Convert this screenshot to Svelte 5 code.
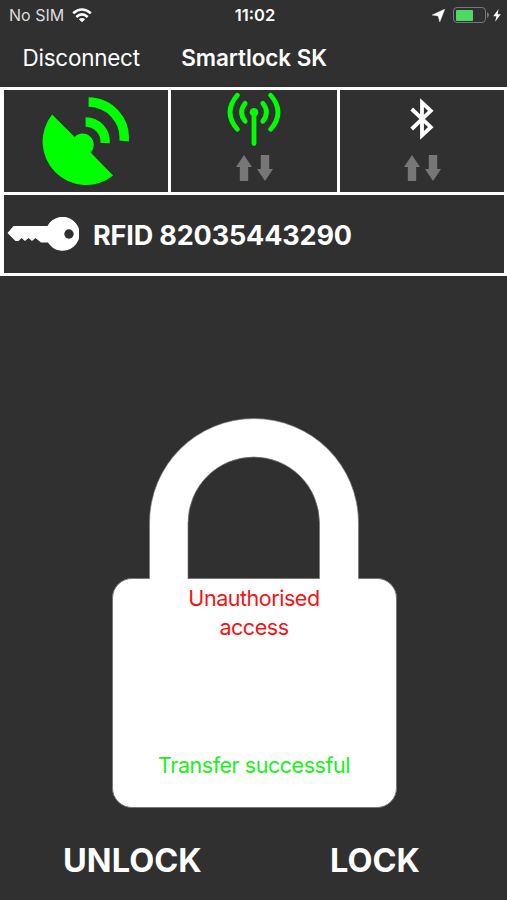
<script lang="ts">
  const carrier = "No SIM";
  const time = "11:02";
  const deviceName = "Smartlock SK";
  const tagId = "82035443290";
  const battery = 0.62;

  const ARROW_UP = "M8 0 L16 12 H12.2 V26 H3.8 V12 H0 Z";
  const ARROW_DOWN = "M3.8 0 H12.2 V14 H16 L8 26 L0 14 H3.8 Z";
</script>

{#snippet traffic()}
  <div class="traffic">
    <svg width="16" height="26" viewBox="0 0 16 26"><path d={ARROW_UP} /></svg>
    <svg width="16" height="26" viewBox="0 0 16 26"><path d={ARROW_DOWN} /></svg>
  </div>
{/snippet}

<div class="screen">
  <div class="status-bar">
    <div class="carrier">
      <span>{carrier}</span>
      <svg width="20" height="15" viewBox="0 0 20 15" fill="none" stroke="#fff" stroke-width="2.6">
        <path d="M1.2 5.3 Q10 -2.3 18.8 5.3" />
        <path d="M4.3 8.9 Q10 4 15.7 8.9" />
        <path d="M10 14.2 L6.9 11.2 Q10 8.8 13.1 11.2 Z" fill="#fff" stroke="none" />
      </svg>
    </div>
    <span class="time">{time}</span>
    <div class="power">
      <svg class="location" width="13" height="13" viewBox="0 0 13 13">
        <path d="M12.7 0.2 L7.8 12.8 L6.2 6.9 L0.2 6 Z" fill="#fff" stroke="#fff" stroke-width="0.5" />
      </svg>
      <div class="battery">
        <div class="level" style="width: {battery * 100}%"></div>
      </div>
      <svg class="nub" width="2" height="6" viewBox="0 0 2 6">
        <path d="M0 0 Q2 1 2 3 Q2 5 0 6 Z" fill="#777" />
      </svg>
      <svg width="8" height="13" viewBox="0 0 8 13">
        <path d="M5.6 0 L0.2 7.2 H3.4 L2.1 12.8 L7.8 5.2 H4.6 Z" fill="#fff" />
      </svg>
    </div>
  </div>

  <header>
    <button class="back">Disconnect</button>
    <h1>{deviceName}</h1>
  </header>

  <section class="panel">
    <div class="cell">
      <svg class="dish" width="88" height="88" viewBox="-1.6 0.5 88 88">
        <path
          d="M8.5 18 L31 40.5 A11 11 0 0 1 47 56 L69.5 79 A43.4 43.4 0 0 1 8.5 18 Z"
          fill="#0f0"
        />
        <g fill="none" stroke="#0f0" stroke-width="9.5">
          <path d="M42 25.5 A19.5 19.5 0 0 1 61.5 46.5" />
          <path d="M45 5.5 A36 36 0 0 1 80.5 44.5" />
        </g>
      </svg>
    </div>
    <div class="cell">
      <svg class="antenna" width="54" height="54" viewBox="0 0 54 54">
        <circle cx="27" cy="20.3" r="4.3" fill="#0f0" />
        <g fill="none" stroke="#0f0" stroke-width="4.8" stroke-linecap="round">
          <path d="M27 20 V51.5" />
          <path d="M18.2 11.3 Q11 20.3 18.2 29.3" />
          <path d="M35.8 11.3 Q43 20.3 35.8 29.3" />
          <path d="M10.3 3.3 Q-4.3 20.3 10.3 37.3" />
          <path d="M43.7 3.3 Q58.3 20.3 43.7 37.3" />
        </g>
      </svg>
      {@render traffic()}
    </div>
    <div class="cell">
      <svg class="bluetooth" width="24" height="42" viewBox="0 0 24 42">
        <path
          d="M1.7 11 L20.8 29.2 L12 37.4 V4.6 L20.8 12.8 L1.7 31"
          fill="none"
          stroke="#fff"
          stroke-width="3.8"
        />
      </svg>
      {@render traffic()}
    </div>
    <div class="cell tag">
      <svg width="72" height="35" viewBox="0 0 72 35">
        <path
          d="M0.5 16 L6.5 9 H40.5 A17 17 0 1 1 41 25.5 H34 L31.5 23.5 L28.5 21 L25 24 L21.5 21 L18 24 L14.5 21 L11.5 24 H8.5 Z"
          fill="#fff"
        />
        <circle cx="62" cy="17" r="4.7" fill="#303030" />
      </svg>
      <span>RFID {tagId}</span>
    </div>
  </section>

  <main>
    <div class="padlock">
      <svg class="shackle" width="210" height="161" viewBox="0 0 210 161">
        <path
          d="M0.5 162 V104.5 A104.5 104 0 0 1 209.5 104.5 V162 H170.5 V105 A65.75 66 0 0 0 39 105 V162 Z"
          fill="#fff"
          stroke="#777"
          stroke-width="0.7"
        />
      </svg>
      <div class="body">
        <p class="alert">Unauthorised access</p>
        <p class="transfer">Transfer successful</p>
      </div>
    </div>
  </main>

  <footer>
    <button>UNLOCK</button>
    <button>LOCK</button>
  </footer>
</div>

<style>
  :global(body) {
    margin: 0;
    background: #303030;
  }

  .screen {
    display: flex;
    flex-direction: column;
    box-sizing: border-box;
    width: 507px;
    height: 900px;
    overflow: hidden;
    background: #303030;
    color: #fff;
    font-family: Inter, "Liberation Sans", sans-serif;
  }

  svg {
    display: block;
    flex: none;
  }

  button {
    padding: 0;
    border: 0;
    background: none;
    color: inherit;
    font: inherit;
    letter-spacing: inherit;
    white-space: nowrap;
  }

  .status-bar {
    display: grid;
    grid-template-columns: 1fr auto 1fr;
    align-items: center;
    height: 30px;
    padding: 0 6px 0 9px;
    font-size: 16px;
  }

  .carrier {
    display: flex;
    align-items: center;
    gap: 8px;
    color: #ddd;
  }

  .time {
    font-size: 16.5px;
    font-weight: 600;
  }

  .power {
    display: flex;
    align-items: center;
    justify-content: flex-end;
  }

  .location {
    margin-right: 8px;
  }

  .battery {
    box-sizing: border-box;
    width: 33px;
    height: 16px;
    padding: 1.5px;
    border: 1.5px solid #777;
    border-radius: 4px;
  }

  .level {
    height: 100%;
    border-radius: 1px;
    background: #4cd964;
  }

  .nub {
    margin: 0 4px 0 1px;
  }

  header {
    display: flex;
    align-items: center;
    height: 55px;
    padding: 0 0 2px 22.5px;
    gap: 41.5px;
    font-size: 22.5px;
    letter-spacing: -0.25px;
  }

  h1 {
    margin: 0;
    font-size: 22.5px;
    font-weight: 600;
    letter-spacing: -0.1px;
  }

  .panel {
    display: grid;
    grid-template-columns: 164px 166px 164px;
    grid-template-rows: 102px 78px;
    gap: 3px;
    padding: 3px 3px 3px 4px;
    background: #fff;
  }

  .cell {
    display: flex;
    flex-direction: column;
    align-items: center;
    background: #303030;
  }

  .dish {
    margin-top: 7px;
  }

  .antenna {
    margin-top: 2px;
  }

  .bluetooth {
    margin-top: 8px;
  }

  .traffic {
    display: flex;
    gap: 5px;
    margin-top: auto;
    margin-bottom: 11px;
    fill: #777;
  }

  .tag {
    grid-column: 1 / -1;
    flex-direction: row;
    gap: 14px;
    padding-left: 3px;
    font-size: 27px;
    font-weight: 700;
    letter-spacing: -0.15px;
  }

  .tag span {
    padding-top: 2px;
  }

  main {
    display: flex;
    flex: 1;
    align-items: flex-end;
    justify-content: center;
    padding-left: 1px;
  }

  .padlock {
    display: flex;
    flex-direction: column;
    align-items: center;
  }

  .body {
    display: flex;
    flex-direction: column;
    align-items: center;
    justify-content: space-between;
    box-sizing: border-box;
    width: 285px;
    height: 230px;
    padding: 5px 0 28px;
    border: 1px solid #777;
    border-radius: 20px;
    background: #fff;
    font-size: 21.5px;
    line-height: 28.5px;
    letter-spacing: -0.46px;
    text-align: center;
  }

  /* the shackle runs into the body without a seam */
  .shackle {
    z-index: 1;
    margin-bottom: -1px;
  }

  p {
    margin: 0;
  }

  .alert {
    width: 150px;
    color: #f01414;
  }

  .transfer {
    color: #1bf01b;
  }

  footer {
    display: flex;
    box-sizing: border-box;
    height: 92px;
    padding: 12px 87px 0 63px;
    align-items: center;
    justify-content: space-between;
    font-size: 32.5px;
    font-weight: 700;
    letter-spacing: 0.05px;
  }
</style>
